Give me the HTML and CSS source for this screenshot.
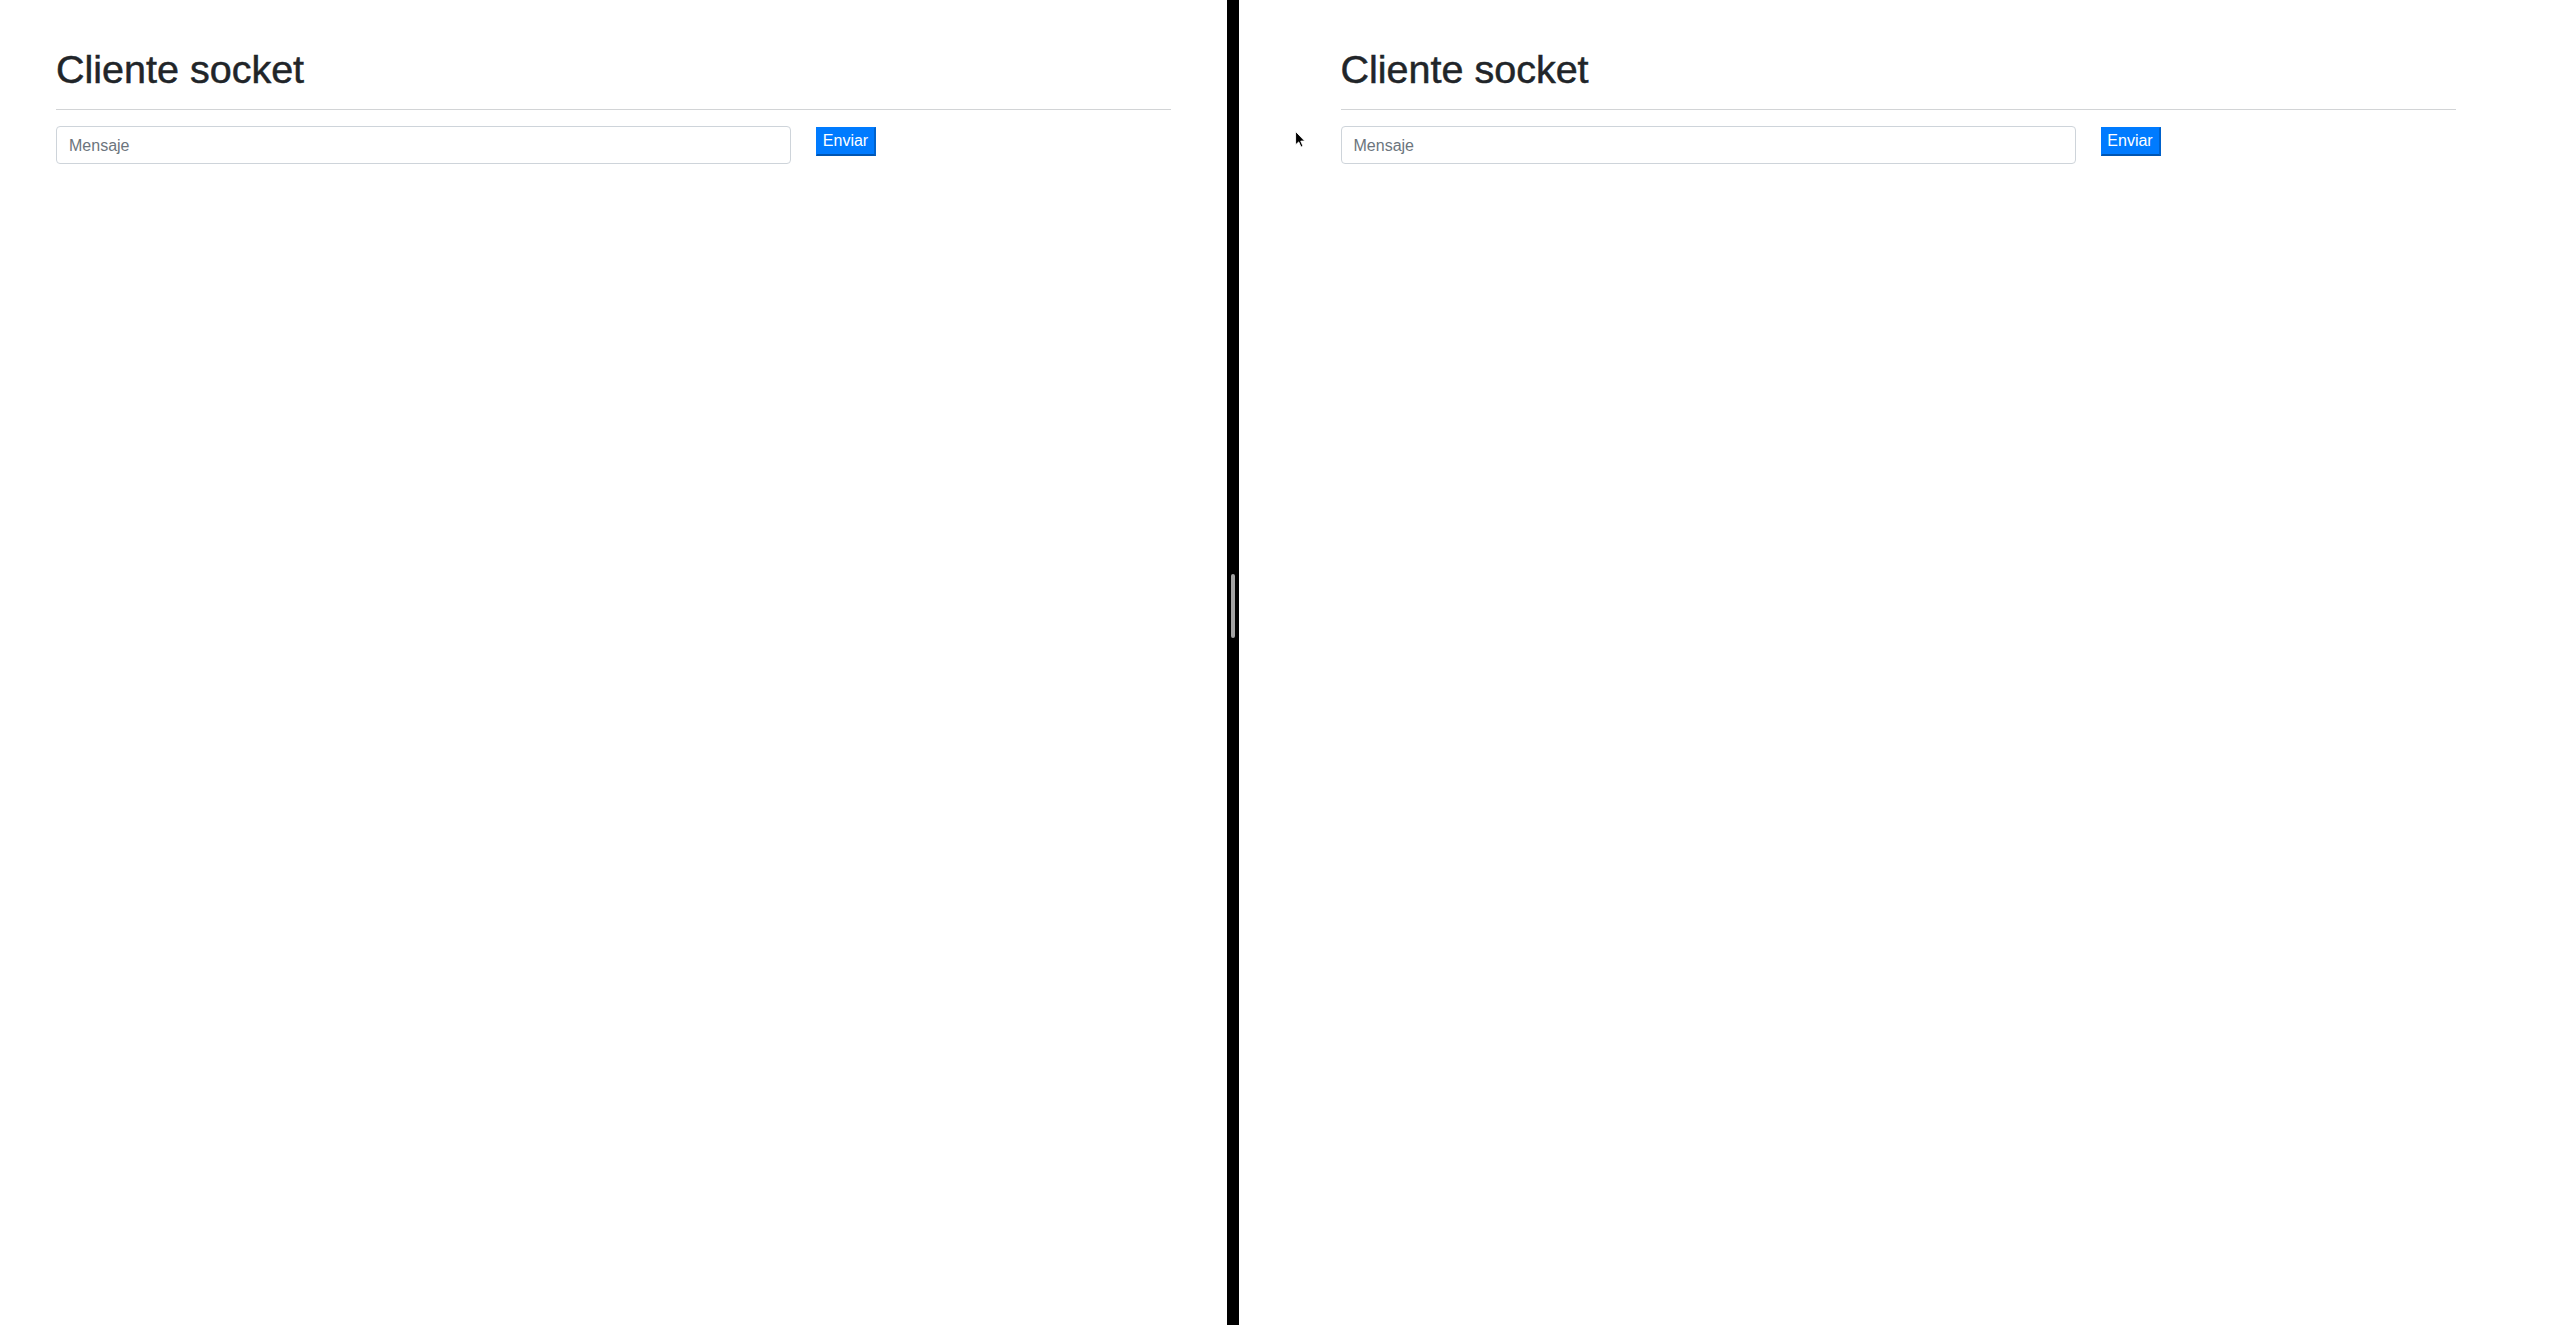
FILE: index.html
```html
<!DOCTYPE html>
<html lang="es">
<head>
  <meta charset="UTF-8">
  <meta name="viewport" content="width=device-width, initial-scale=1.0">
  <title>Cliente socket</title>
  <link rel="stylesheet" href="styles.css">
</head>
<body>
  <div class="split">
    <!-- Left window -->
    <div class="pane pane-left">
      <div class="container">
        <h1>Cliente socket</h1>
        <hr>
        <form class="send-form">
          <input type="text" class="form-control" placeholder="Mensaje">
          <button type="submit" class="btn-primary">Enviar</button>
        </form>
      </div>
    </div>

    <!-- Divider between windows -->
    <div class="divider">
      <div class="handle"></div>
    </div>

    <!-- Right window -->
    <div class="pane pane-right">
      <div class="container">
        <h1>Cliente socket</h1>
        <hr>
        <form class="send-form">
          <input type="text" class="form-control" placeholder="Mensaje">
          <button type="submit" class="btn-primary">Enviar</button>
        </form>
      </div>
      <svg class="cursor" width="11" height="17" viewBox="0 0 12 19">
        <path d="M0.5 0.5 L0.5 15.5 L4 12.2 L6.6 18 L8.8 17 L6.3 11.3 L10.8 11.3 Z" fill="#000" stroke="#fff" stroke-width="1"/>
      </svg>
    </div>
  </div>
</body>
</html>
```

FILE: styles.css
```css
html, body {
  margin: 0;
  padding: 0;
  height: 100%;
}

body {
  font-family: "Liberation Sans", Arial, sans-serif;
  font-size: 16px;
  line-height: 1.5;
  color: #212529;
  background-color: #fff;
}

.split {
  display: flex;
  height: 1325px;
}

.pane {
  position: relative;
  padding-top: 46px;
  box-sizing: border-box;
}

.pane-left {
  width: 1227px;
}

.pane-right {
  flex: 1;
}

.container {
  max-width: 1115px;
  margin: 0 auto;
}

h1 {
  margin: 0;
  font-size: 39.5px;
  font-weight: 500;
  line-height: 1.215;
  color: #212529;
  -webkit-text-stroke: 0.5px #212529;
}

hr {
  margin: 15px 0 16px;
  border: 0;
  border-top: 1px solid #d2d4d6;
}

/* Message form */
.send-form {
  display: flex;
  align-items: flex-start;
  gap: 25px;
}

.form-control {
  width: 735px;
  height: 38px;
  box-sizing: border-box;
  padding: 7px 12px 5px;
  font-family: inherit;
  font-size: 16px;
  line-height: 1.5;
  color: #495057;
  background-color: #fff;
  border: 1px solid #ced4da;
  border-radius: 4px;
  outline: none;
}

.form-control::placeholder {
  color: #6c757d;
}

.btn-primary {
  width: 60px;
  height: 29px;
  margin-top: 1px;
  padding: 1px 0 0;
  font-family: inherit;
  font-size: 16px;
  line-height: 1.5;
  color: #fff;
  background-color: #007bff;
  border: 1px solid #007bff;
  border-right: 2px solid #0062cc;
  border-bottom: 2px solid #0056b3;
  border-radius: 0;
  cursor: pointer;
}

/* Window divider */
.divider {
  width: 12px;
  background-color: #000;
  display: flex;
  justify-content: center;
}

.handle {
  width: 4px;
  height: 64px;
  margin-top: 574px;
  border-radius: 2px;
  background-color: #a3a3a3;
}

.cursor {
  position: absolute;
  left: 56px;
  top: 131px;
}
```
